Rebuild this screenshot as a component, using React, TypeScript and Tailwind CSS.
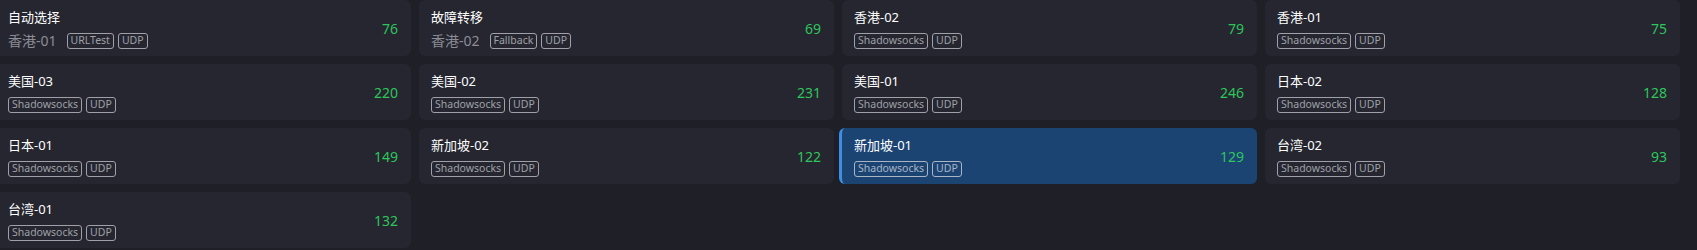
import React from "react";

type Node = {
  name: string;
  sub?: string;
  type: string;
  delay: number;
  selected?: boolean;
};

const nodes: Node[] = [
  { name: "自动选择", sub: "香港-01", type: "URLTest", delay: 76 },
  { name: "故障转移", sub: "香港-02", type: "Fallback", delay: 69 },
  { name: "香港-02", type: "Shadowsocks", delay: 79 },
  { name: "香港-01", type: "Shadowsocks", delay: 75 },
  { name: "美国-03", type: "Shadowsocks", delay: 220 },
  { name: "美国-02", type: "Shadowsocks", delay: 231 },
  { name: "美国-01", type: "Shadowsocks", delay: 246 },
  { name: "日本-02", type: "Shadowsocks", delay: 128 },
  { name: "日本-01", type: "Shadowsocks", delay: 149 },
  { name: "新加坡-02", type: "Shadowsocks", delay: 122 },
  { name: "新加坡-01", type: "Shadowsocks", delay: 129, selected: true },
  { name: "台湾-02", type: "Shadowsocks", delay: 93 },
  { name: "台湾-01", type: "Shadowsocks", delay: 132 },
];

const font = { fontFamily: '"Noto Sans", "Noto Sans CJK SC", sans-serif' };

function Tag({ children, selected }: { children: React.ReactNode; selected?: boolean }) {
  return (
    <span
      className={
        "inline-flex h-[16px] items-center rounded-[3px] border px-[3px] text-[10.5px] leading-none " +
        (selected ? "border-[#a9b4c4] text-[#a9b4c4]" : "border-[#9fa0a8] text-[#9fa0a8]")
      }
    >
      {children}
    </span>
  );
}

function Card({ n }: { n: Node }) {
  return (
    <div
      className={
        "flex h-[56px] items-center rounded-md pr-[13px] " +
        (n.selected
          ? "-ml-[3px] border-l-[3px] border-[#3d8fe3] bg-[#1b4473] pl-3"
          : "bg-[#25262f] pl-3")
      }
    >
      <div className="flex min-w-0 flex-1 flex-col gap-[7px]">
        <div className="text-[13px] leading-[18px] text-white">{n.name}</div>
        <div className="flex items-center gap-[4px]">
          {n.sub && (
            <span className="mr-[6px] text-[14px] leading-[16px] text-[#8c8d96]">{n.sub}</span>
          )}
          <Tag selected={n.selected}>{n.type}</Tag>
          <Tag selected={n.selected}>UDP</Tag>
        </div>
      </div>
      <div className="text-[14px] text-[#2ec55c]">{n.delay}</div>
    </div>
  );
}

export default function App() {
  return (
    <div className="h-[250px] w-full overflow-hidden bg-[#1e1f27]" style={font}>
      <div className="-ml-1 grid w-[1684px] grid-cols-4 gap-2">
        {nodes.map((n) => (
          <Card key={n.name} n={n} />
        ))}
      </div>
    </div>
  );
}
